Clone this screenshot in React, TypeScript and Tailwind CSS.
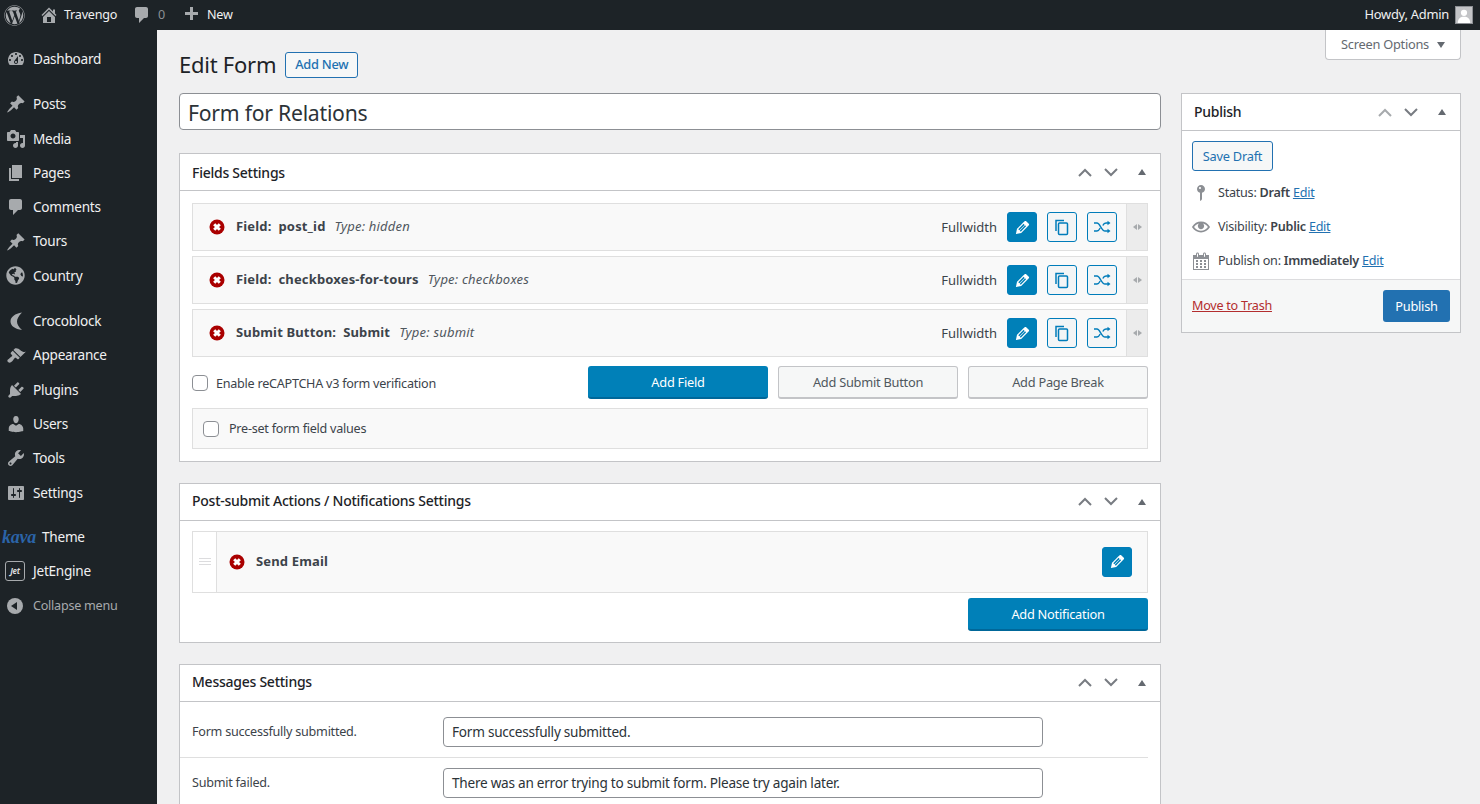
import { ReactNode } from "react";
import { FaWordpress, FaGlobeAmericas } from "react-icons/fa";

const paths: Record<string, string> = {
    dashboard: "M3.76 16h12.48c1.1-1.37 1.76-3.11 1.76-5 0-4.42-3.58-8-8-8s-8 3.58-8 8c0 1.89.66 3.63 1.76 5zM10 4c.55 0 1 .45 1 1s-.45 1-1 1-1-.45-1-1 .45-1 1-1zM6 6c.55 0 1 .45 1 1s-.45 1-1 1-1-.45-1-1 .45-1 1-1zm8 0c.55 0 1 .45 1 1s-.45 1-1 1-1-.45-1-1 .45-1 1-1zm-5.37 5.55L12 7v6c0 1.1-.9 2-2 2s-2-.9-2-2c0-.57.24-1.08.63-1.45zM4 10c.55 0 1 .45 1 1s-.45 1-1 1-1-.45-1-1 .45-1 1-1zm12 0c.55 0 1 .45 1 1s-.45 1-1 1-1-.45-1-1 .45-1 1-1zm-5 3c0-.55-.45-1-1-1s-1 .45-1 1 .45 1 1 1 1-.45 1-1z",
    pin: "M10.44 3.02l1.82-1.82 6.36 6.35-1.83 1.82c-1.05-.68-2.48-.57-3.41.36l-.75.75c-.92.93-1.04 2.35-.35 3.41l-1.83 1.82-2.41-2.41-2.8 2.79c-.42.42-3.38 2.71-3.8 2.29s1.86-3.39 2.28-3.81l2.79-2.79L4.1 9.36l1.83-1.82c1.05.69 2.48.57 3.4-.36l.75-.75c.93-.92 1.05-2.35.36-3.41z",
    media: "M13 11V4c0-.55-.45-1-1-1h-1.67L9 1H5L3.67 3H2c-.55 0-1 .45-1 1v7c0 .55.45 1 1 1h10c.55 0 1-.45 1-1zM7 4.5c1.38 0 2.5 1.12 2.5 2.5S8.38 9.5 7 9.5 4.5 8.38 4.5 7 5.62 4.5 7 4.5zM14 6h5v10.5c0 1.38-1.12 2.5-2.5 2.5S14 17.88 14 16.5s1.12-2.5 2.5-2.5c.17 0 .34.02.5.05V9h-3V6zm-4 8.05V13h2v3.5c0 1.38-1.12 2.5-2.5 2.5S7 17.88 7 16.5 8.12 14 9.5 14c.17 0 .34.02.5.05z",
    page: "M6 15V2h10v13H6zm-1 1h8v2H3V5h2v11z",
    comment: "M5 2h9c1.1 0 2 .9 2 2v7c0 1.1-.9 2-2 2h-2l-5 5v-5H5c-1.1 0-2-.9-2-2V4c0-1.1.9-2 2-2z",
    moon: "M16 1.500C9 2.500 4.500 6 4.500 10.500S9 18 16 19c-3.500-3-5-6-5-8.500S12.500 5 16 1.500z",
    brush: "M14.48 11.06L7.41 3.99l1.5-1.5c.5-.56 2.3-.47 3.51.32 1.21.8 1.43 1.28 2.91 2.1 1.18.64 2.45 1.26 4.45.85zm-.71.71L6.7 4.7 4.93 6.47c-.39.39-.39 1.02 0 1.41l1.06 1.06c.39.39.39 1.03 0 1.42-.6.6-1.43 1.11-2.21 1.69-.35.26-.7.53-1.01.84C1.43 13.23.76 14.75 2.05 16c1.28 1.28 2.81.6 4.17-.76.31-.31.58-.66.84-1.01.58-.78 1.09-1.61 1.69-2.21.39-.39 1.02-.39 1.41 0l1.06 1.06c.39.39 1.02.39 1.41 0z",
    plugin: "M13.11 4.36L9.87 7.6 8 5.73l3.24-3.24c.35-.34 1.05-.2 1.56.32.52.51.66 1.21.31 1.55zm-8 1.77l.91-1.12 9.01 9.01-1.19.84c-.71.71-2.63 1.16-3.82 1.16H6.14L4.9 17.26c-.59.59-1.54.59-2.12 0-.59-.58-.59-1.53 0-2.12l1.24-1.24v-3.88c0-1.13.4-3.19 1.09-3.89zm7.26 3.97l3.24-3.24c.34-.35 1.04-.21 1.55.31.52.51.66 1.21.31 1.55l-3.24 3.25z",
    users: "M10 9.25c-2.27 0-2.73-3.44-2.73-3.44C7 4.02 7.82 2 9.97 2c2.16 0 2.98 2.02 2.71 3.81 0 0-.41 3.44-2.68 3.44zm0 2.57L12.72 10c2.39 0 4.52 2.33 4.52 4.53v2.49s-3.65 1.13-7.24 1.13c-3.65 0-7.24-1.13-7.24-1.13v-2.49c0-2.25 1.94-4.48 4.47-4.48z",
    tools: "M16.68 9.77c-1.34 1.34-3.3 1.67-4.95.99l-5.41 6.52c-.99.99-2.59.99-3.58 0s-.99-2.59 0-3.57l6.52-5.42c-.68-1.65-.35-3.61.99-4.95 1.28-1.28 3.12-1.62 4.72-1.06l-2.89 2.89 2.82 2.82 2.86-2.87c.53 1.58.18 3.39-1.08 4.65zM3.81 16.21c.4.39 1.04.39 1.43 0 .4-.4.4-1.04 0-1.43-.39-.4-1.03-.4-1.43 0-.39.39-.39 1.03 0 1.43z",
    settings: "M18 16V4c0-.55-.45-1-1-1H3c-.55 0-1 .45-1 1v12c0 .55.45 1 1 1h14c.55 0 1-.45 1-1zM8 11h1c.55 0 1 .45 1 1s-.45 1-1 1H8v1.5c0 .28-.22.5-.5.5s-.5-.22-.5-.5V13H6c-.55 0-1-.45-1-1s.45-1 1-1h1V5.5c0-.28.22-.5.5-.5s.5.22.5.5V11zm5-2h-1c-.55 0-1-.45-1-1s.45-1 1-1h1V5.5c0-.28.22-.5.5-.5s.5.22.5.5V7h1c.55 0 1 .45 1 1s-.45 1-1 1h-1v5.500c0 .28-.22.5-.5.5s-.5-.22-.5-.5V9z",
    home: "M16 8.5l1.53 1.53-1.06 1.06L10 4.62l-6.47 6.47-1.06-1.06L10 2.5l4 4v-2h2v4zm-6-2.46l6 5.99V18H4v-5.97zM12 17v-5H8v5h4z",
    plus: "M17 7v3h-5v5H9v-5H4V7h5V2h3v5h5z",
    edit: "M13.89 3.39l2.71 2.72c.46.46.42 1.24.03 1.64l-8.01 8.02-5.56 1.16 1.16-5.58s7.6-7.63 7.99-8.03c.39-.39 1.22-.39 1.68.07zm-2.73 2.79l-5.59 5.61 1.11 1.11 5.54-5.65zm-2.97 8.23l5.58-5.6-1.07-1.08-5.59 5.6z",
    status: "M14 6c0 1.86-1.28 3.41-3 3.86V16c0 1-2 2-2 2V9.86c-1.72-.45-3-2-3-3.86 0-2.21 1.79-4 4-4s4 1.79 4 4zM8 5c0 .55.45 1 1 1s1-.45 1-1-.45-1-1-1-1 .45-1 1z",
    eye: "M19.7 9.4C17.7 6 14 3.9 10 3.9S2.3 6 .3 9.4L0 10l.3.6c2 3.4 5.7 5.5 9.7 5.5s7.7-2.1 9.7-5.5l.3-.6-.3-.6zM10 14.1c-3.1 0-6-1.6-7.7-4.1C3.6 8 5.7 6.6 8 6.1c-.9.6-1.5 1.7-1.5 2.9 0 1.9 1.6 3.5 3.5 3.5s3.5-1.6 3.5-3.5c0-1.2-.6-2.3-1.5-2.9 2.3.5 4.4 1.9 5.7 3.9-1.7 2.5-4.6 4.1-7.7 4.1z",
    calendar: "M15 4h3v15H2V4h3V3c0-.41.15-.76.44-1.06.29-.29.65-.44 1.06-.44s.77.15 1.06.44c.29.3.44.65.44 1.06v1h4V3c0-.41.15-.76.44-1.06.29-.29.65-.44 1.06-.44s.77.15 1.06.44c.29.3.44.65.44 1.06v1zM6 3v2.500c0 .14.05.26.15.36.09.09.21.14.35.14s.26-.05.35-.14c.1-.1.15-.22.15-.36V3c0-.14-.05-.26-.15-.35-.09-.1-.21-.15-.35-.15s-.26.05-.35.15c-.1.09-.15.21-.15.35zm7 0v2.500c0 .14.05.26.14.36.1.09.22.14.36.14s.26-.05.36-.14c.09-.1.14-.22.14-.36V3c0-.14-.05-.26-.14-.35-.1-.1-.22-.15-.36-.15s-.26.05-.36.15c-.09.09-.14.21-.14.35zm4 15V8H3v10h14zM7 9v2H5V9h2zm2 0h2v2H9V9zm4 2V9h2v2h-2zm-6 1v2H5v-2h2zm2 0h2v2H9v-2zm4 2v-2h2v2h-2zm-6 1v2H5v-2h2zm4 2H9v-2h2v2zm4 0h-2v-2h2v2z",
};

const Dash = ({ name, className }: { name: string; className: string }) => (
    <svg viewBox="0 0 20 20" fill="currentColor" className={className}>
        <path d={paths[name]} />
    </svg>
);

const menuIcon = "w-5 h-5 text-[#a7aaad]";

const MenuItem = ({ icon, label }: { icon: ReactNode; label: string }) => (
    <div className="h-[34.3px] flex items-center">
        <div className="w-[33px] pl-[6px] flex items-center shrink-0">{icon}</div>
        <span className="text-[13.6px] text-[#f0f0f1]">{label}</span>
    </div>
);

const Sidebar = () => (
    <aside className="w-[157px] shrink-0 bg-[#1d2327] pt-[12px] h-full">
        <MenuItem icon={<Dash name="dashboard" className={menuIcon} />} label="Dashboard" />
        <div className="h-[11px]" />
        <MenuItem icon={<Dash name="pin" className={menuIcon} />} label="Posts" />
        <MenuItem icon={<Dash name="media" className={menuIcon} />} label="Media" />
        <MenuItem icon={<Dash name="page" className={menuIcon} />} label="Pages" />
        <MenuItem icon={<Dash name="comment" className={menuIcon} />} label="Comments" />
        <MenuItem icon={<Dash name="pin" className={menuIcon} />} label="Tours" />
        <MenuItem icon={<FaGlobeAmericas className="w-[19px] h-[19px] text-[#a7aaad]" />} label="Country" />
        <div className="h-[11px]" />
        <MenuItem icon={<Dash name="moon" className={menuIcon} />} label="Crocoblock" />
        <MenuItem icon={<Dash name="brush" className={menuIcon} />} label="Appearance" />
        <MenuItem icon={<Dash name="plugin" className={menuIcon} />} label="Plugins" />
        <MenuItem icon={<Dash name="users" className={menuIcon} />} label="Users" />
        <MenuItem icon={<Dash name="tools" className={menuIcon} />} label="Tools" />
        <MenuItem icon={<Dash name="settings" className={menuIcon} />} label="Settings" />
        <div className="h-[10px]" />
        <div className="h-[34.3px] flex items-center">
            <span className="w-[42px] pl-[2px] shrink-0 font-['Liberation_Serif',serif] italic font-bold text-[18px] text-[#2b64a8] leading-none">kava</span>
            <span className="text-[13.6px] text-[#f0f0f1]">Theme</span>
        </div>
        <MenuItem
            icon={
                <div className="w-5 h-5 -ml-[1px] border border-[#a7aaad] rounded-[3px] flex items-center justify-center text-[8px] font-bold italic text-[#dcdcde] leading-none">
                    Jet
                </div>
            }
            label="JetEngine"
        />
        <div className="h-[34.3px] flex items-center">
            <div className="w-[33px] pl-[7px] shrink-0">
                <div className="w-4 h-4 rounded-full bg-[#a7aaad] flex items-center justify-center">
                    <div className="w-0 h-0 border-y-[4px] border-y-transparent border-r-[6px] border-r-[#1d2327] mr-[2px]" />
                </div>
            </div>
            <span className="mt-[1px] text-[12.6px] text-[#a7aaad]">Collapse menu</span>
        </div>
    </aside>
);

const TopBar = () => (
    <header className="h-[30px] shrink-0 bg-[#1d2327] flex items-center text-[12.6px] text-[#f0f0f1]">
        <FaWordpress className="w-[21px] h-[21px] text-[#a7aaad] ml-[4px]" />
        <Dash name="home" className="w-5 h-5 text-[#a7aaad] ml-[14px]" />
        <span className="ml-[5px]">Travengo</span>
        <Dash name="comment" className="w-5 h-5 text-[#a7aaad] ml-[15px]" />
        <span className="ml-[6px] text-[#8c8f94]">0</span>
        <Dash name="plus" className="w-5 h-5 text-[#a7aaad] ml-[16px]" />
        <span className="ml-[6px]">New</span>
        <span className="ml-auto text-[12.9px]">Howdy, Admin</span>
        <div className="ml-[6px] mr-[7px] w-[18px] h-[18px] bg-[#c3c4c7] border border-[#8c8f94] overflow-hidden">
            <svg viewBox="0 0 18 18" className="w-full h-full" fill="#fff">
                <circle cx="9" cy="6.500" r="3.500" />
                <path d="M2 18c0-5 3-7 7-7s7 2 7 7z" />
            </svg>
        </div>
    </header>
);

const BoxControls = ({ lightUp }: { lightUp?: boolean }) => (
    <div className="flex items-center shrink-0">
        <svg viewBox="0 0 14 9" className={lightUp ? "w-[14px] h-[9px] text-[#a7aaad]" : "w-[14px] h-[9px] text-[#787c82]"} fill="none" stroke="currentColor" strokeWidth="2"><path d="M1 8l6-6 6 6" /></svg>
        <svg viewBox="0 0 14 9" className="w-[14px] h-[9px] text-[#787c82] ml-[12px]" fill="none" stroke="currentColor" strokeWidth="2"><path d="M1 1l6 6 6-6" /></svg>
        <div className="ml-[20px] w-0 h-0 border-x-[4px] border-x-transparent border-b-[6px] border-b-[#646970]" />
    </div>
);

const Box = ({ title, children, className, lightUp, titleUp }: { title: string; children: ReactNode; className?: string; lightUp?: boolean; titleUp?: boolean }) => (
    <section className={`bg-white border border-[#c3c4c7] ${className ?? ""}`}>
        <div className="h-[37px] flex items-center justify-between pl-[12px] pr-[14px] border-b border-[#c3c4c7]">
            <h2 className={titleUp ? "text-[14px] font-medium text-[#1d2327] -mt-[2px]" : "text-[14px] font-medium text-[#1d2327]"}>{title}</h2>
            <BoxControls lightUp={lightUp} />
        </div>
        {children}
    </section>
);

const ErrorIcon = () => (
    <svg viewBox="0 0 16 16" className="w-4 h-4 shrink-0 -ml-[1px]">
        <circle cx="8" cy="8" r="7.500" fill="#a00" />
        <path d="M5.200 5.200l5.600 5.600M10.800 5.200l-5.600 5.600" stroke="#fff" strokeWidth="3" />
    </svg>
);

const SquareBtn = ({ icon, filled }: { icon: string; filled?: boolean }) => (
    <button className={`w-[30px] h-[30px] rounded-[3px] border border-[#007cba] flex items-center justify-center ${filled ? "bg-[#0080b8] text-white" : "bg-[#f3f5f6] text-[#007cba]"}`}>
        {icon === "copy" && (
            <svg viewBox="0 0 20 20" className="w-5 h-5" fill="none" stroke="currentColor" strokeWidth="1.500">
                <path d="M4 14V3.500h8" />
                <rect x="6.500" y="6" width="9" height="11.500" rx="1" />
            </svg>
        )}
        {icon === "shuffle" && (
            <svg viewBox="0 0 20 20" className="w-5 h-5" fill="none" stroke="currentColor" strokeWidth="1.400">
                <path d="M2 6h3c3 0 4.500 8 8 8h3" />
                <path d="M2 14h3c1.500 0 2.400-1.400 3.200-3M10.800 8.500C11.500 7 12.400 6 14 6h2" />
                <path d="M15.500 3.700L18.500 6l-3 2.300zM15.500 11.700l3 2.300-3 2.300z" fill="currentColor" stroke="none" />
            </svg>
        )}
        {icon === "edit" && <Dash name="edit" className="w-[19px] h-[19px]" />}
    </button>
);

const FieldRow = ({ label, value, type }: { label: string; value: string; type: string }) => (
    <div className="h-[48px] flex items-center bg-[#f9f9f9] border border-[#dfdfdf] shrink-0">
        <div className="flex-1 flex items-center pl-[17px]">
            <ErrorIcon />
            <span className="ml-[11px] text-[13px] font-bold text-[#3c434a] whitespace-pre tracking-[0.15px]">{label}:  {value}</span>
            <span className="ml-[9px] text-[13px] italic text-[#50575e] tracking-[0.2px]">Type: {type}</span>
        </div>
        <span className="text-[13px] text-[#3c434a] mr-[10px] mt-[2px] tracking-normal">Fullwidth</span>
        <SquareBtn icon="edit" filled />
        <div className="w-[10px]" />
        <SquareBtn icon="copy" />
        <div className="w-[10px]" />
        <SquareBtn icon="shuffle" />
        <div className="ml-[9px] w-[21px] self-stretch bg-[#ececec] border-l border-[#dfdfdf] flex items-center justify-center gap-[1px]">
            <div className="w-0 h-0 border-y-[3px] border-y-transparent border-r-[4px] border-r-[#a7aaad]" />
            <div className="w-0 h-0 border-y-[3px] border-y-transparent border-l-[4px] border-l-[#a7aaad]" />
        </div>
    </div>
);

const PrimaryBtn = ({ children }: { children: ReactNode }) => (
    <button className="w-[180px] h-[33px] pt-[2px] rounded-[3px] bg-[#0080b8] border-b-2 border-[#006799] text-[12.8px] text-white">{children}</button>
);

const GreyBtn = ({ children }: { children: ReactNode }) => (
    <button className="w-[180px] h-[33px] pt-[1px] rounded-[3px] bg-[#f6f7f7] border border-[#c3c4c7] border-b-2 text-[12.8px] text-[#50575e]">{children}</button>
);

const Check = () => <div className="w-4 h-4 rounded-[4px] bg-white border border-[#8c8f94] shrink-0" />;

const MessageRow = ({ label, value, last }: { label: string; value: string; last?: boolean }) => (
    <div className={last ? "flex items-center pl-[12px] h-[50px]" : "flex items-center pl-[12px] h-[51px] border-b border-[#dfdfdf]"}>
        <span className="w-[251px] mt-[2px] text-[12.6px] text-[#3c434a]">{label}</span>
        <div className="w-[600px] h-[30px] pt-[2px] bg-white border border-[#8c8f94] rounded-[4px] flex items-center px-[8px] text-[13.6px] text-[#2c3338]">{value}</div>
    </div>
);

const MetaLine = ({ icon, label, value }: { icon: ReactNode; label: string; value: string }) => (
    <div className="h-[34px] flex items-center text-[12.6px] text-[#3c434a]">
        <div className="w-[18px] mr-[8px] flex justify-center shrink-0">{icon}</div>
        <span>{label} <b className="font-semibold">{value}</b> <a className="text-[#2271b1] underline">Edit</a></span>
    </div>
);

export default function App() {
    return (
        <div className="h-screen overflow-hidden flex flex-col bg-[#f0f0f1] font-['Noto_Sans',sans-serif] tracking-[-0.25px]">
            <TopBar />
            <div className="flex-1 flex min-h-0">
                <Sidebar />
                <main className="flex-1 min-w-0 relative pl-[22px] pr-[19px]">
                    <div className="absolute top-0 right-[19px] w-[136px] h-[30px] bg-white border border-t-0 border-[#c3c4c7] rounded-b-[4px] flex items-center justify-center gap-[8px] text-[12.8px] text-[#646970]">
                        Screen Options
                        <div className="w-0 h-0 border-x-[4px] border-x-transparent border-t-[6px] border-t-[#646970]" />
                    </div>

                    <div className="flex items-center h-[63px] pt-[6px]">
                        <h1 className="text-[22px] text-[#1d2327]">Edit Form</h1>
                        <button className="ml-[9px] w-[73px] h-[26px] rounded-[3px] border border-[#2271b1] bg-[#f6f7f7] text-[12.8px] font-medium text-[#2271b1]">Add New</button>
                    </div>

                    <div className="flex gap-[20px] items-start">
                        <div className="w-[982px] shrink-0">
                            <div className="h-[37px] pt-[3px] bg-white border border-[#8c8f94] rounded-[4px] flex items-center px-[8px] text-[21.2px] text-[#2c3338]">Form for Relations</div>

                            <Box title="Fields Settings" className="mt-[23px] h-[308.6px]">
                                <div className="px-[12px] pt-[12px] flex flex-col gap-[5px]">
                                    <FieldRow label="Field" value="post_id" type="hidden" />
                                    <FieldRow label="Field" value="checkboxes-for-tours" type="checkboxes" />
                                    <FieldRow label="Submit Button" value="Submit" type="submit" />
                                </div>
                                <div className="flex items-center px-[12px] mt-[9px] gap-[10px]">
                                    <Check />
                                    <span className="flex-1 -ml-[2px] mt-[3px] text-[12.6px] text-[#3c434a]">Enable reCAPTCHA v3 form verification</span>
                                    <PrimaryBtn>Add Field</PrimaryBtn>
                                    <GreyBtn>Add Submit Button</GreyBtn>
                                    <GreyBtn>Add Page Break</GreyBtn>
                                </div>
                                <div className="mx-[12px] mt-[9px] h-[41px] bg-[#f9f9f9] border border-[#dfdfdf] flex items-center pl-[10px] gap-[10px]">
                                    <Check />
                                    <span className="mt-[2px] text-[12.6px] text-[#3c434a]">Pre-set form field values</span>
                                </div>
                            </Box>

                            <Box title="Post-submit Actions / Notifications Settings" titleUp className="mt-[21px] h-[160px]">
                                <div className="mx-[12px] mt-[10px] h-[62px] border border-[#dfdfdf] flex">
                                    <div className="w-[24px] border-r border-[#dfdfdf] flex flex-col items-center justify-center gap-[2px]">
                                        <div className="w-3 h-px bg-[#dcdcde]" />
                                        <div className="w-3 h-px bg-[#dcdcde]" />
                                        <div className="w-3 h-px bg-[#dcdcde]" />
                                    </div>
                                    <div className="flex-1 bg-[#f9f9f9] flex items-center pl-[13px] pr-[15px]">
                                        <ErrorIcon />
                                        <span className="ml-[11px] flex-1 text-[13px] font-bold text-[#3c434a] tracking-[0.15px]">Send Email</span>
                                        <SquareBtn icon="edit" filled />
                                    </div>
                                </div>
                                <div className="mt-[5px] mr-[12px] flex justify-end">
                                    <PrimaryBtn>Add Notification</PrimaryBtn>
                                </div>
                            </Box>

                            <Box title="Messages Settings" titleUp className="mt-[21px] pb-[20px]">
                                <div className="mt-[5px] mr-[12px]">
                                    <MessageRow label="Form successfully submitted." value="Form successfully submitted." />
                                    <MessageRow last label="Submit failed." value="There was an error trying to submit form. Please try again later." />
                                </div>
                            </Box>
                        </div>

                        <Box title="Publish" lightUp titleUp className="w-[280px] h-[240px] shrink-0 flex flex-col">
                            <div className="px-[10px] pt-[10px] flex-1">
                                <button className="w-[81px] h-[30px] pt-[1px] rounded-[3px] border border-[#2271b1] bg-[#f6f7f7] text-[12.8px] text-[#2271b1]">Save Draft</button>
                                <div className="mt-[5px]">
                                    <MetaLine icon={<Dash name="status" className="w-5 h-5 shrink-0 text-[#8c8f94]" />} label="Status:" value="Draft" />
                                    <MetaLine icon={<Dash name="eye" className="w-[18px] h-[18px] shrink-0 text-[#8c8f94]" />} label="Visibility:" value="Public" />
                                    <MetaLine icon={<Dash name="calendar" className="w-5 h-5 shrink-0 text-[#8c8f94]" />} label="Publish on:" value="Immediately" />
                                </div>
                            </div>
                            <div className="h-[53px] bg-[#f6f7f7] border-t border-[#dcdcde] flex items-center justify-between px-[10px]">
                                <a className="text-[12.6px] text-[#b32d2e] underline">Move to Trash</a>
                                <button className="w-[67px] h-[32px] pt-[1px] rounded-[3px] bg-[#2271b1] text-[12.8px] text-white">Publish</button>
                            </div>
                        </Box>
                    </div>
                </main>
            </div>
        </div>
    );
}
